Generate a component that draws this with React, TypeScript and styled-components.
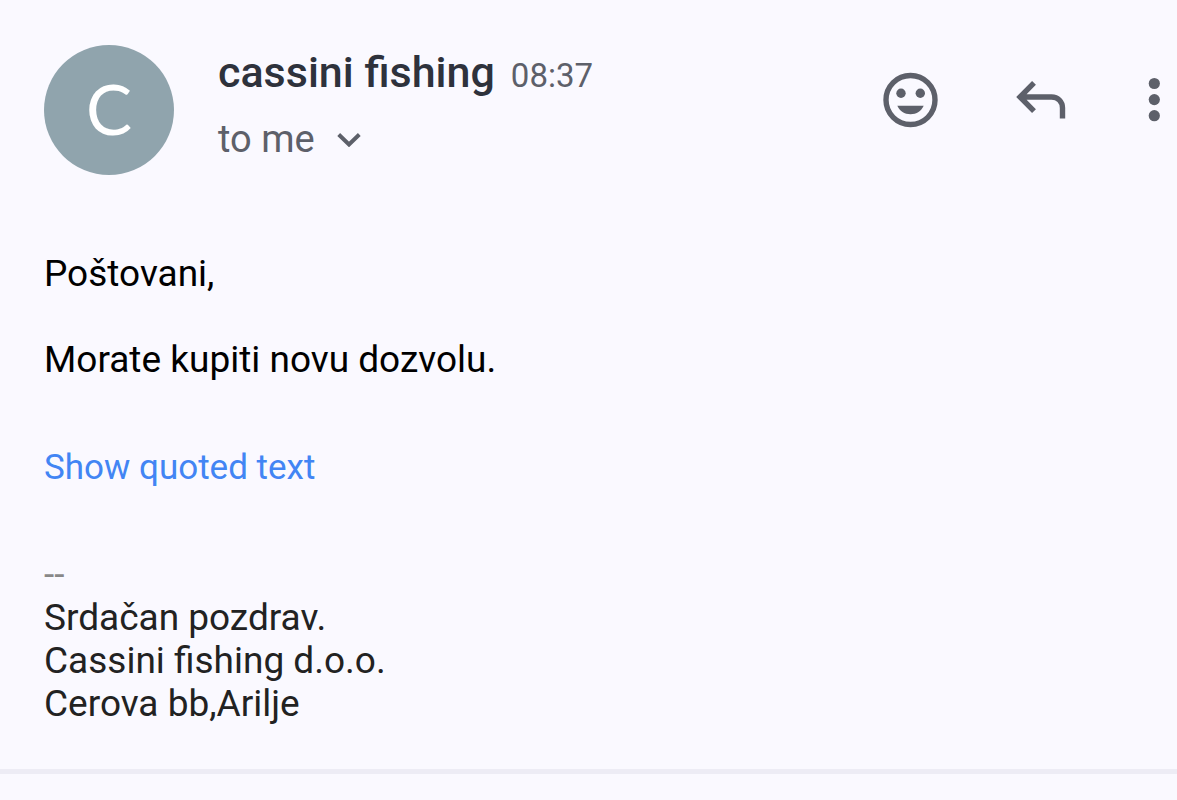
import React from "react";
import styled, { createGlobalStyle } from "styled-components";

const GlobalStyle = createGlobalStyle`
  *, *::before, *::after { box-sizing: border-box; }
  body {
    margin: 0;
    background: #faf9ff;
    font-family: Roboto, "Liberation Sans", sans-serif;
  }
`;

const Message = styled.article`
  border-bottom: 5px solid #edecf5;
  padding: 45px 0 44px;
`;

const Header = styled.header`
  display: flex;
  align-items: flex-start;
  padding: 0 16px 0 44px;
`;

const Avatar = styled.div`
  display: flex;
  align-items: center;
  justify-content: center;
  flex: none;
  width: 130px;
  height: 130px;
  padding-bottom: 4px;
  border-radius: 50%;
  background: #90a4ad;
  color: #fff;
  font: 400 69px/1 Lato, sans-serif;
`;

const Sender = styled.div`
  flex: 1;
  min-width: 0;
  padding-left: 44px;
`;

const NameLine = styled.div`
  display: flex;
  align-items: baseline;
  gap: 16px;
  line-height: 54px;
`;

const Name = styled.h1`
  margin: 0;
  color: #2e323c;
  font-size: 43px;
  font-weight: 500;
`;

const Time = styled.time`
  color: #5d606a;
  font-size: 33px;
`;

const Recipients = styled.button`
  display: flex;
  align-items: center;
  gap: 22px;
  margin-top: 12px;
  padding: 0;
  border: 0;
  background: none;
  color: #5d606a;
  font: 400 38px/48px Roboto, sans-serif;
  cursor: pointer;
`;

const Actions = styled.div`
  display: flex;
  flex: none;
  gap: 76px;
  padding-top: 27px;
`;

const IconButton = styled.button`
  display: flex;
  padding: 0;
  border: 0;
  background: none;
  color: #5d606a;
  cursor: pointer;
`;

const Body = styled.div`
  padding: 77px 44px 0;
  color: #000;
  font-size: 37px;
  line-height: 43px;
`;

const Paragraph = styled.p`
  margin: 0 0 43px;
`;

const QuoteLink = styled.a`
  display: inline-block;
  margin: 22px 0 64px;
  color: #4285f4;
  font-size: 35px;
  text-decoration: none;
`;

const Signature = styled.footer`
  color: #222;
`;

const SignatureMark = styled.div`
  color: #888;
`;

export default function App() {
  return (
    <>
      <GlobalStyle />
      <Message>
        <Header>
          <Avatar>C</Avatar>
          <Sender>
            <NameLine>
              <Name>cassini fishing</Name>
              <Time>08:37</Time>
            </NameLine>
            <Recipients type="button">
              to me
              <svg width="24" height="16" viewBox="0 0 24 16" fill="none" aria-hidden="true">
                <path d="M1.700 3.500 12 13.500 22.300 3.500" stroke="currentColor" strokeWidth="4" />
              </svg>
            </Recipients>
          </Sender>
          <Actions>
            <IconButton type="button" aria-label="Add reaction">
              <svg width="56" height="56" viewBox="0 0 56 56" fill="currentColor" aria-hidden="true">
                <circle cx="27.5" cy="28" r="24.5" fill="none" stroke="currentColor" strokeWidth="5.4" />
                <circle cx="18" cy="21.3" r="4.7" />
                <circle cx="37.3" cy="21.3" r="4.7" />
                <path d="M14.300 33.800H40.700C38.500 39 33.500 42.300 27.500 42.300S16.500 39 14.300 33.800Z" />
              </svg>
            </IconButton>
            <IconButton type="button" aria-label="Reply">
              <svg width="56" height="56" viewBox="0 0 56 56" fill="none" aria-hidden="true">
                <path
                  d="M19 10.800 5 25 19 39.200M5 25H36.500C43 25 47.500 29.500 47.500 36V46.500"
                  stroke="currentColor"
                  strokeWidth="5.400"
                />
              </svg>
            </IconButton>
            <IconButton type="button" aria-label="More options">
              <svg width="14" height="56" viewBox="0 0 14 56" fill="currentColor" aria-hidden="true">
                <circle cx="7.300" cy="11.500" r="5.600" />
                <circle cx="7.300" cy="27.600" r="5.600" />
                <circle cx="7.300" cy="43.700" r="5.600" />
              </svg>
            </IconButton>
          </Actions>
        </Header>
        <Body>
          <Paragraph>Poštovani,</Paragraph>
          <Paragraph>Morate kupiti novu dozvolu.</Paragraph>
          <QuoteLink href="#quoted">Show quoted text</QuoteLink>
          <Signature>
            <SignatureMark>--</SignatureMark>
            <div>Srdačan pozdrav.</div>
            <div>Cassini fishing d.o.o.</div>
            <div>Cerova bb,Arilje</div>
          </Signature>
        </Body>
      </Message>
    </>
  );
}
